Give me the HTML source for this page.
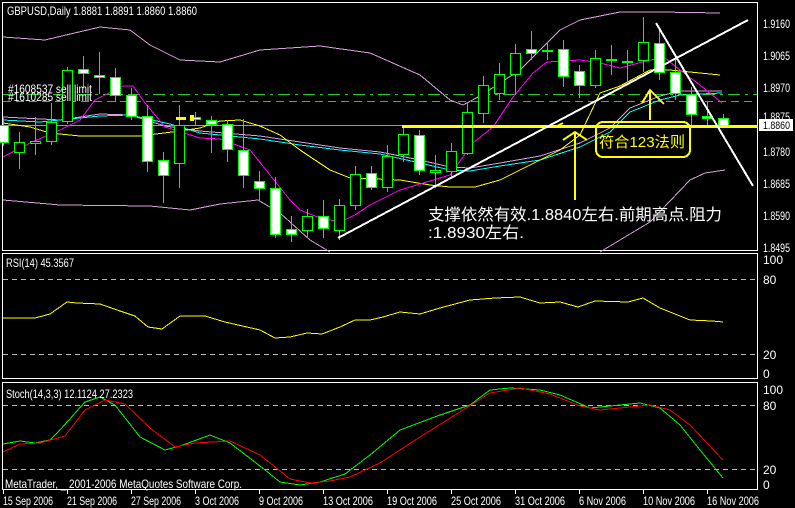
<!DOCTYPE html>
<html><head><meta charset="utf-8"><style>
html,body{margin:0;padding:0;background:#000;width:795px;height:508px;overflow:hidden}
svg{display:block}
text{font-family:"Liberation Sans","DejaVu Sans",sans-serif;font-size:12px;fill:#fff}
.cn{font-family:"Liberation Sans","Noto Sans CJK SC",sans-serif}
</style></head><body>
<svg id="s" width="795" height="508" viewBox="0 0 795 508" xmlns="http://www.w3.org/2000/svg" shape-rendering="crispEdges">
<rect width="795" height="508" fill="#000"/>
<rect x="2.5" y="2.5" width="755" height="248" fill="none" stroke="#fff"/>
<rect x="2.5" y="253.5" width="755" height="125" fill="none" stroke="#fff"/>
<rect x="2.5" y="382.5" width="755" height="107" fill="none" stroke="#fff"/>
<g id="dyn"></g>
<text x="7" y="15" textLength="190" lengthAdjust="spacingAndGlyphs">GBPUSD,Daily  1.8881 1.8891 1.8860 1.8860</text>
<text x="8" y="93" textLength="84" lengthAdjust="spacingAndGlyphs">#1608537 sell limit</text>
<text x="8" y="101" textLength="84" lengthAdjust="spacingAndGlyphs">#1610285 sell limit</text>
<g>
<text x="763" y="28" textLength="27" lengthAdjust="spacingAndGlyphs">1.9160</text>
<text x="763" y="60" textLength="27" lengthAdjust="spacingAndGlyphs">1.9065</text>
<text x="763" y="92" textLength="27" lengthAdjust="spacingAndGlyphs">1.8970</text>
<text x="763" y="121" textLength="27" lengthAdjust="spacingAndGlyphs">1.8875</text>
</g>
<rect x="759" y="119" width="34" height="12" fill="#fff"/>
<text x="763" y="129" textLength="27" lengthAdjust="spacingAndGlyphs" style="fill:#000;font-size:11px">1.8860</text>
<g>
<text x="763" y="156" textLength="27" lengthAdjust="spacingAndGlyphs">1.8780</text>
<text x="763" y="188" textLength="27" lengthAdjust="spacingAndGlyphs">1.8685</text>
<text x="763" y="220" textLength="27" lengthAdjust="spacingAndGlyphs">1.8590</text>
<text x="763" y="252" textLength="27" lengthAdjust="spacingAndGlyphs">1.8495</text>
</g>
<text class="cn" x="428" y="220" style="font-size:16px" textLength="294" lengthAdjust="spacingAndGlyphs">支撑依然有效.1.8840左右.前期高点.阻力</text>
<text class="cn" x="428" y="238" style="font-size:16px" textLength="96" lengthAdjust="spacingAndGlyphs">:1.8930左右.</text>
<rect x="596" y="122" width="94" height="35" rx="7" fill="none" stroke="#ff0" stroke-width="2"/>
<text class="cn" x="599" y="147" style="font-size:15px;fill:#ff0" textLength="86" lengthAdjust="spacingAndGlyphs">符合123法则</text>
<text x="6" y="267" textLength="68" lengthAdjust="spacingAndGlyphs">RSI(14) 45.3567</text>
<g>
<text x="763" y="264">100</text>
<text x="763" y="284">80</text>
<text x="763" y="359">20</text>
<text x="763" y="378">0</text>
</g>
<text x="6" y="398" textLength="127" lengthAdjust="spacingAndGlyphs">Stoch(14,3,3) 12.1124 27.2323</text>
<g>
<text x="763" y="394">100</text>
<text x="763" y="410">80</text>
<text x="763" y="474">20</text>
<text x="763" y="489">0</text>
</g>
<text x="5" y="488" textLength="237" lengthAdjust="spacingAndGlyphs">MetaTrader, _ 2001-2006 MetaQuotes Software Corp.</text>
<g>
<text x="3" y="505" textLength="50" lengthAdjust="spacingAndGlyphs">15 Sep 2006</text>
<text x="67" y="505" textLength="50" lengthAdjust="spacingAndGlyphs">21 Sep 2006</text>
<text x="131" y="505" textLength="50" lengthAdjust="spacingAndGlyphs">27 Sep 2006</text>
<text x="195" y="505" textLength="44" lengthAdjust="spacingAndGlyphs">3 Oct 2006</text>
<text x="259" y="505" textLength="44" lengthAdjust="spacingAndGlyphs">9 Oct 2006</text>
<text x="323" y="505" textLength="50" lengthAdjust="spacingAndGlyphs">13 Oct 2006</text>
<text x="387" y="505" textLength="50" lengthAdjust="spacingAndGlyphs">19 Oct 2006</text>
<text x="451" y="505" textLength="50" lengthAdjust="spacingAndGlyphs">25 Oct 2006</text>
<text x="515" y="505" textLength="50" lengthAdjust="spacingAndGlyphs">31 Oct 2006</text>
<text x="579" y="505" textLength="47" lengthAdjust="spacingAndGlyphs">6 Nov 2006</text>
<text x="643" y="505" textLength="52" lengthAdjust="spacingAndGlyphs">10 Nov 2006</text>
<text x="707" y="505" textLength="52" lengthAdjust="spacingAndGlyphs">16 Nov 2006</text>
</g>
</svg>
<script>
var NS="http://www.w3.org/2000/svg",g=document.getElementById("dyn");
function el(t,a){var e=document.createElementNS(NS,t);for(var k in a)e.setAttribute(k,a[k]);g.appendChild(e);return e;}
function pl(pts,c,w,extra){var a={points:pts.map(function(p){return p.join(",")}).join(" "),fill:"none",stroke:c,"stroke-width":w||1};for(var k in extra)a[k]=extra[k];el("polyline",a);}
function ln(x1,y1,x2,y2,c,w,d){var a={x1:x1,y1:y1,x2:x2,y2:y2,stroke:c,"stroke-width":w||1};if(d)a["stroke-dasharray"]=d;el("line",a);}
ln(3,279.5,757,279.5,"#bbb",1,"5,4");ln(3,354.5,757,354.5,"#bbb",1,"5,4");
ln(3,405.5,757,405.5,"#bbb",1,"5,4");ln(3,469.5,757,469.5,"#bbb",1,"5,4");
ln(3,94.5,757,94.5,"#2c2",1,"12,5,3,5");ln(3,101.5,757,101.5,"#2c2",1,"8,5");
ln(3,125.5,757,125.5,"#999",1);
pl([[3,37],[45,40],[100,27],[130,30],[150,45],[180,60],[220,62],[260,50],[320,46],[370,53],[420,75],[450,100],[463,105],[480,96],[520,70],[560,30],[580,20],[620,12],[660,12],[720,13]],"#d9a0dd");
pl([[3,200],[60,205],[150,206],[190,210],[220,204],[258,200],[280,213],[310,240],[330,252]],"#d9a0dd");
pl([[600,252],[650,222],[690,180],[705,173],[725,170]],"#d9a0dd");
pl([[3,117],[60,120],[100,114],[130,115],[165,126],[200,131],[260,136],[300,142],[340,148],[380,152],[420,160],[450,167],[470,168],[500,163],[540,156],[580,143],[610,128],[630,108],[660,96],[680,91],[722,91]],"#d9a0dd");
pl([[3,120],[40,122],[100,116],[130,115],[170,124],[200,133],[260,139],[300,145],[340,150],[380,154],[420,163],[450,170],[470,171],[500,166],[540,160],[580,147],[610,132],[630,112],[660,100],[680,95],[722,93]],"#0ff");
pl([[3,123],[30,127],[50,133],[80,136],[140,136],[180,131],[200,128],[220,121],[240,120],[260,126],[280,135],[300,150],[330,170],[350,178],[400,180],[430,185],[450,187],[475,187],[500,180],[530,165],[560,150],[580,135],[600,93],[620,86],[650,70],[670,70],[720,75]],"#ff0");
pl([[3,157],[30,143],[60,130],[80,120],[95,100],[123,86],[133,86],[145,103],[165,127],[200,138],[220,139],[250,150],[270,175],[290,200],[300,210],[320,218],[340,222],[355,215],[370,205],[400,190],[450,175],[473,143],[493,127],[513,97],[533,73],[547,62],[580,60],[600,63],[620,68],[650,60],[665,58],[680,70],[700,85],[722,103]],"#f0f");
var C=[[0,125,142,118,146,1],[1,142,152,132,169,0],[2,141,143,117,155,0],[3,122,141,103,145,0],[4,70,121,67,124,0],[5,69,73,56,88,1],[6,75,77,52,94,1],[7,77,95,68,102,1],[8,95,116,88,120,1],[9,116,161,105,172,1],[10,160,175,152,203,1],[11,125,163,105,188,0],[12,117,119,112,125,1],[13,120,124,116,153,1],[14,124,149,120,162,1],[15,150,175,119,188,1],[16,181,188,171,200,1],[17,188,234,177,238,1],[18,229,234,216,242,1],[19,216,230,209,238,0],[20,216,228,200,238,1],[21,205,230,199,240,0],[22,174,205,166,210,0],[23,173,187,166,190,1],[24,156,187,145,192,0],[25,134,154,127,162,0],[26,135,170,130,175,1],[27,170,172,155,188,0],[28,151,171,143,178,0],[29,112,153,102,155,0],[30,85,113,76,123,0],[31,74,93,63,100,0],[32,53,74,44,95,0],[33,49,53,31,60,1],[34,50,51,42,60,0],[35,49,76,40,87,1],[36,71,85,65,98,1],[37,58,85,50,88,0],[38,59,60,45,75,0],[39,61,62,50,85,0],[40,42,60,17,72,0],[41,43,72,27,80,1],[42,72,93,60,100,1],[43,94,114,87,125,1],[44,116,118,102,126,1],[45,118,125,114,125,1]];
C.forEach(function(c){var x=3+16*c[0];
ln(x+.5,c[3],x+.5,c[4],"#0f0",1);
el("rect",{x:x-4.5,y:c[1]+.5,width:10,height:Math.max(1,c[2]-c[1]),fill:c[5]?"#fff":"#000",stroke:"#0f0","stroke-width":1});});
el("rect",{x:176,y:117,width:10,height:3,fill:"#ff0"});el("rect",{x:190,y:115,width:4,height:6,fill:"#ff0"});
ln(402,126.5,758,126.5,"#ff0",3);
ln(338,238,748,20,"#fff",2);ln(656,23,753,186,"#fff",2);
ln(575,132,575,200,"#ff0",2);pl([[563,140],[575,132],[587,140]],"#ff0",2);
ln(650,90,650,120,"#ff0",2);pl([[642,103],[650,90],[664,104]],"#ff0",2);
pl([[555,127],[563,123]],"#ff0",2);
pl([[3,318],[35,318],[50,314],[67,302],[77,303],[100,304],[120,311],[135,316],[148,327],[162,329],[180,316],[205,316],[225,322],[260,330],[275,338],[290,337],[307,333],[322,334],[340,327],[355,320],[370,320],[383,317],[400,312],[420,314],[440,308],[470,300],[495,298],[520,297],[540,303],[560,302],[578,307],[595,301],[628,302],[643,298],[660,308],[690,320],[712,321],[723,322]],"#ff0");
pl([[3,444],[20,441],[35,443],[50,440],[60,430],[85,402],[100,397],[115,405],[140,437],[165,450],[180,446],[210,435],[230,443],[260,466],[280,482],[300,485],[320,482],[345,474],[370,455],[400,430],[440,415],[470,405],[490,390],[510,388],[540,390],[560,395],[590,408],[620,405],[640,403],[660,408],[680,425],[700,450],[723,478]],"#0f0");
pl([[3,452],[20,444],[40,443],[65,436],[85,410],[105,400],[125,404],[150,428],[175,447],[195,443],[230,441],[260,455],[290,479],[310,483],[330,481],[350,477],[380,463],[420,437],[460,412],[490,393],[520,388],[550,394],[580,406],[600,410],[620,408],[650,405],[670,410],[690,425],[723,460]],"#f00");
for(var i=0;i<12;i++){var tx=3+64*i;ln(tx+.5,490,tx+.5,494,"#fff",1);}
</script>
</body></html>
